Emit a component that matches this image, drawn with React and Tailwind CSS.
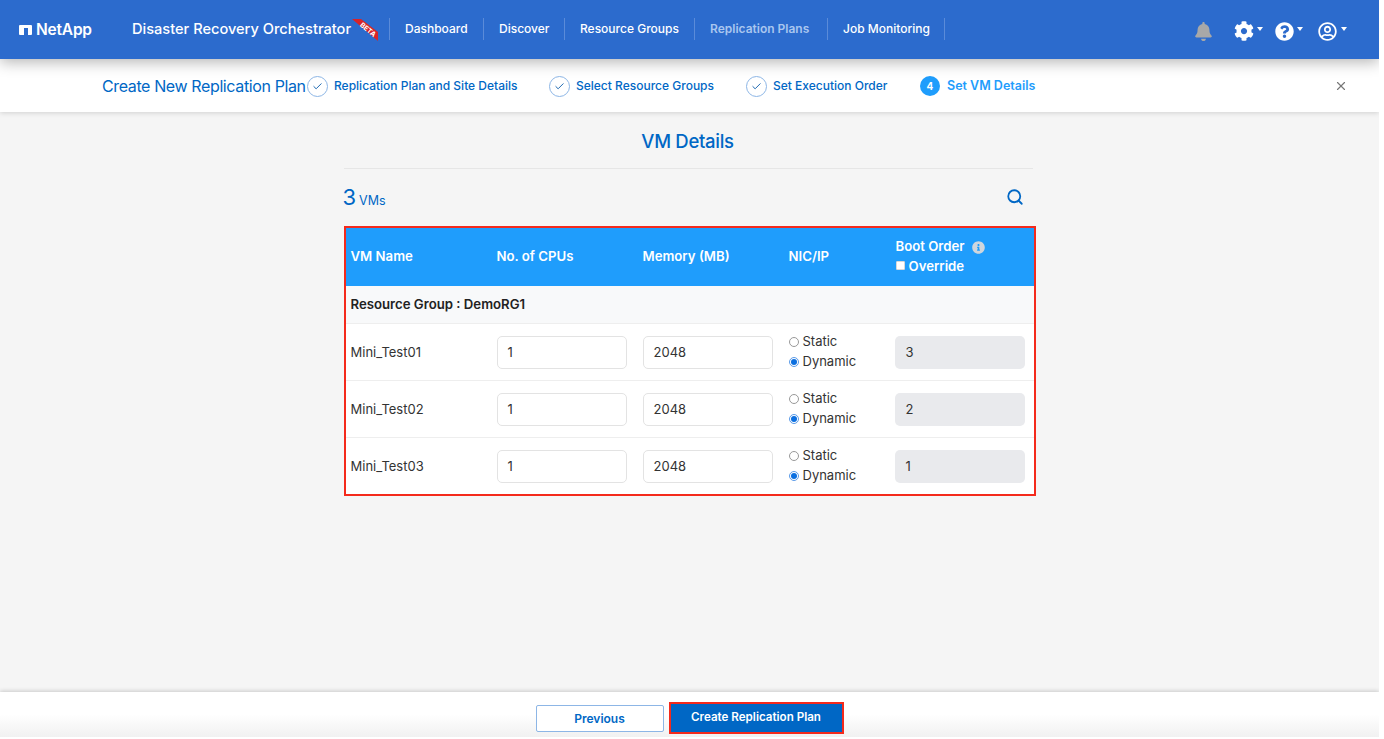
import { FaBell, FaCog, FaQuestionCircle, FaRegUserCircle, FaInfoCircle } from "react-icons/fa";
import { Check, Search, X } from "lucide-react";

const navItems = [
  { label: "Dashboard", w: "w-[94px]" },
  { label: "Discover", w: "w-[81px]" },
  { label: "Resource Groups", w: "w-[130px]" },
  { label: "Replication Plans", w: "w-[133px]", active: true },
  { label: "Job Monitoring", w: "w-[117px]" },
];

const steps = [
  { label: "Replication Plan and Site Details", w: "w-[242px]" },
  { label: "Select Resource Groups", w: "w-[197px]" },
  { label: "Set Execution Order", w: "w-[174px]" },
];

const vms = [
  { name: "Mini_Test01", boot: 3 },
  { name: "Mini_Test02", boot: 2 },
  { name: "Mini_Test03", boot: 1 },
];

function Caret({ className = "ml-[3px]" }) {
  return <span className={`${className} mb-[5px] w-0 h-0 border-x-[3.5px] border-x-transparent border-t-[4px] border-t-white`} />;
}

function Radio({ label, checked }) {
  return (
    <div className="flex items-center h-[20px]">
      {checked ? (
        <span className="mb-[1px] w-[10px] h-[10px] rounded-full bg-white border border-[#5b9be8] flex items-center justify-center">
          <span className="w-[6px] h-[6px] rounded-full bg-[#0b6fe0]" />
        </span>
      ) : (
        <span className="mb-[1px] w-[10px] h-[10px] rounded-full bg-white border border-[#999999]" />
      )}
      <span className="ml-[4px] text-[13px] text-[#333]">{label}</span>
    </div>
  );
}

function VmRow({ vm }) {
  return (
    <div className="grid grid-cols-[146px_146px_146px_106px_130px] items-center h-[57px] last:h-[56px] pl-[5px] bg-white border-b last:border-b-0 border-[#eeeeee] text-[13px] text-[#333]">
      <div className="pt-px">{vm.name}</div>
      <div className="h-[33px] w-[130px] flex items-center pt-px pl-[10px] rounded-[5px] bg-white border border-[#e3e3e3]">1</div>
      <div className="h-[33px] w-[130px] flex items-center pt-px pl-[10px] rounded-[5px] bg-white border border-[#e3e3e3]">2048</div>
      <div className="flex flex-col">
        <Radio label="Static" />
        <Radio label="Dynamic" checked />
      </div>
      <div className="h-[33px] w-[130px] flex items-center pt-px pl-[11px] rounded-[5px] bg-[#e9eaed]">{vm.boot}</div>
    </div>
  );
}

export default function App() {
  return (
    <div className="w-[1379px] h-[737px] flex flex-col bg-[#f5f5f5] font-['Inter',sans-serif] overflow-hidden">
      {/* HEADER */}
      <header className="relative z-20 h-[59px] shrink-0 flex items-center bg-[#2c6bcd] text-white pl-[19px] shadow-[0_3px_14px_rgba(0,0,0,0.3)]">
        <div className="w-[113px] flex items-center">
          <span className="w-[13px] h-[10px] bg-white rounded-[1px] flex items-end justify-center">
            <span className="w-[4px] h-[7px] bg-[#2c6bcd]" />
          </span>
          <span className="ml-[4px] text-[15.5px] font-semibold tracking-[-0.2px]">NetApp</span>
        </div>
        <div className="relative w-[257px] text-[14.6px] font-medium whitespace-nowrap">
          Disaster Recovery Orchestrator
          <svg className="absolute left-[220px] top-0" width="28" height="24" viewBox="0 0 28 24">
            <polygon points="0,0 9,0 26,13 26,22" fill="#d8232a" />
            <text x="0" y="0" fontSize="7" fontWeight="700" textAnchor="middle" fill="#ffffff" fontFamily="Inter, sans-serif" transform="translate(14.5,12.5) rotate(40)">BETA</text>
          </svg>
        </div>
        <div className="flex items-center h-[22px] mb-[1px] border-l border-[#5a8bd9]">
          {navItems.map((n) => (
            <div
              key={n.label}
              className={`${n.w} h-[22px] flex items-center pl-[15px] border-r border-[#5a8bd9] text-[12px] whitespace-nowrap ${n.active ? "font-semibold text-[#a9c6ef]" : "font-medium text-white"}`}
            >
              {n.label}
            </div>
          ))}
        </div>
        <div className="ml-auto flex items-center pr-[32px] mt-[3px]">
          <FaBell className="text-[#a8a8a8] mr-[21px]" size={19} />
          <FaCog size={20} />
          <Caret />
          <FaQuestionCircle className="ml-[12px]" size={19} />
          <Caret />
          <FaRegUserCircle className="ml-[15px]" size={19} />
          <Caret className="ml-[4px]" />
        </div>
      </header>

      {/* STEPS */}
      <div className="relative z-10 h-[53px] shrink-0 flex items-center bg-white pt-[1px] pl-[102px] pr-[31px] shadow-[0_1px_5px_rgba(0,0,0,0.15)]">
        <h1 className="w-[205px] text-[16px] text-[#0067c5] whitespace-nowrap tracking-[-0.38px]">Create New Replication Plan</h1>
        {steps.map((s) => (
          <div key={s.label} className={`${s.w} flex items-center`}>
            <span className="w-[21px] h-[21px] rounded-full border border-[#8db6e6] flex items-center justify-center">
              <Check className="text-[#0b5cab]" size={11} strokeWidth={2} />
            </span>
            <span className="ml-[6px] text-[12px] font-medium text-[#0067c5] whitespace-nowrap">{s.label}</span>
          </div>
        ))}
        <div className="flex items-center">
          <span className="w-[20px] h-[20px] rounded-full bg-[#1f9dfc] flex items-center justify-center text-[10px] font-bold text-white">4</span>
          <span className="ml-[7px] text-[12.5px] font-semibold text-[#1f9dfc] whitespace-nowrap">Set VM Details</span>
        </div>
        <X className="ml-auto text-[#777]" size={14} />
      </div>

      {/* CONTENT */}
      <main className="flex-1 w-[692px] mx-auto">
        <h2 className="mt-[16px] h-[26px] pr-[4px] text-center text-[18.5px] leading-[26px] font-medium tracking-[-0.3px] text-[#0067c5]">VM Details</h2>
        <div className="mt-[14px] h-px bg-[#e6e6e6] mr-[3px]" />
        <div className="mt-[14px] h-[28px] flex items-center justify-between pr-[12px] text-[#0067c5]">
          <div className="flex items-baseline">
            <span className="-ml-px text-[22px] leading-[28px]">3</span>
            <span className="ml-[3px] text-[12.5px]">VMs</span>
          </div>
          <Search size={18} strokeWidth={2.4} />
        </div>
        <div className="mt-[15px] border-[2.5px] border-[#f42a1c]">
          <div className="grid grid-cols-[146px_146px_146px_106px_130px] items-center h-[58px] pl-[5px] bg-[#1f9dfc] text-[13.2px] font-semibold text-white">
            <div>VM Name</div>
            <div>No. of CPUs</div>
            <div>Memory (MB)</div>
            <div>NIC/IP</div>
            <div className="pl-[1px]">
              <div className="flex items-center h-[20px]">
                Boot Order
                <FaInfoCircle className="ml-[7px] text-[#cfd6dd]" size={13} />
              </div>
              <div className="flex items-center h-[20px]">
                <span className="mb-[3px] w-[9px] h-[9px] bg-white border border-[#d8d8d8] rounded-[1px]" />
                <span className="ml-[4px]">Override</span>
              </div>
            </div>
          </div>
          <div className="h-[38px] flex items-center pt-px pl-[5px] bg-[#f8f9fa] border-b border-[#eeeeee] text-[13.2px] font-semibold text-[#222]">
            Resource Group : DemoRG1
          </div>
          {vms.map((vm) => (
            <VmRow key={vm.name} vm={vm} />
          ))}
        </div>
      </main>

      {/* FOOTER */}
      <footer className="relative h-[45px] shrink-0 flex items-center justify-center bg-gradient-to-b from-white via-white to-[#f1f1f1] shadow-[0_-1px_4px_rgba(0,0,0,0.18)]">
        <button className="w-[128px] h-[27px] mr-[5px] mt-[8px] rounded-[2px] bg-white border border-[#8db6e6] text-[12px] font-semibold text-[#0067c5]">
          Previous
        </button>
        <button className="w-[175px] h-[32px] mt-[7px] border-[2.5px] border-[#f42a1c] bg-[#0067c5] text-[11.6px] font-semibold text-white">
          Create Replication Plan
        </button>
      </footer>
    </div>
  );
}
